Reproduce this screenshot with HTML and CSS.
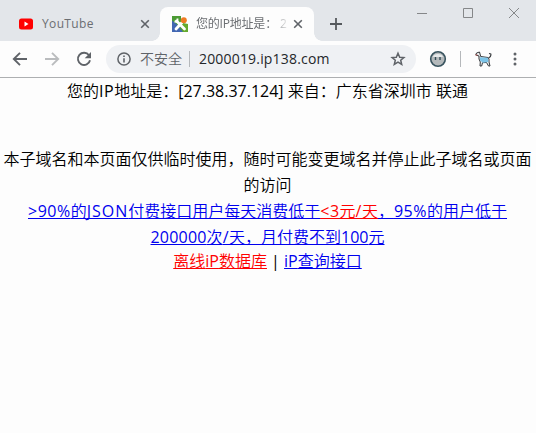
FILE: index.html
```html
<!DOCTYPE html>
<html lang="zh-CN">
<head>
<meta charset="utf-8">
<title>您的IP地址是</title>
<link rel="stylesheet" href="styles.css">
</head>
<body>
<header class="tabstrip">
  <div class="tab tab-idle">
    <svg class="favicon" width="16" height="16" viewBox="0 0 16 16"><rect x="1" y="2.5" width="14" height="11" rx="2.5" fill="#f00"/><path d="M6.5 5.5v5L10.5 8z" fill="#fff"/></svg>
    <span class="tab-title youtube">YouTube</span>
    <svg class="close" width="10" height="10" viewBox="0 0 10 10"><path d="M1.2 1.2l7.6 7.6M8.8 1.2L1.2 8.8" stroke="#5f6368" stroke-width="1.6"/></svg>
  </div>
  <div class="tab tab-active">
    <svg class="favicon" width="16" height="16" viewBox="0 0 16 16"><path d="M0 0h16v16H0z" fill="#4c9b35"/><path d="M0 4.5l5 4L11 16H0z" fill="#4267b2"/><path d="M9 8l7-1v9h-5z" fill="#65aa2d"/><path d="M9 0h7v8l-5-1-2-3z" fill="#fff"/><path d="M4.5 5l8 8M10 6.5L4 13" stroke="#fff" stroke-width="2.8" stroke-linecap="round"/><path d="M2.5 5.5l3 .5V2.5" fill="none" stroke="#fff" stroke-width="1.8"/><circle cx="11.8" cy="4.3" r="3" fill="#ee7b24"/></svg>
    <span class="tab-title page-title">您的IP地址是： 2</span>
    <svg class="close" width="10" height="10" viewBox="0 0 10 10"><path d="M1.2 1.2l7.6 7.6M8.8 1.2L1.2 8.8" stroke="#5f6368" stroke-width="1.6"/></svg>
  </div>
  <svg class="plus" width="12" height="12" viewBox="0 0 12 12"><path d="M6 0v12M0 6h12" stroke="#55595d" stroke-width="1.8"/></svg>
  <div class="window-controls">
    <svg width="10" height="10" viewBox="0 0 10 10"><path d="M0 5.5h10" stroke="#858789"/></svg>
    <svg width="10" height="10" viewBox="0 0 10 10"><path d="M.5.5h9v9h-9z" fill="none" stroke="#858789"/></svg>
    <svg width="10" height="10" viewBox="0 0 10 10"><path d="M0 0l10 10M10 0L0 10" stroke="#858789"/></svg>
  </div>
</header>
<nav class="toolbar">
  <svg class="nav-icon" width="16" height="16" viewBox="0 0 16 16"><path d="M15 8H2M8 1.8L1.8 8 8 14.2" fill="none" stroke="#5f6368" stroke-width="1.9"/></svg>
  <svg class="nav-icon" width="16" height="16" viewBox="0 0 16 16"><path d="M1 8h13M8 1.8L14.2 8 8 14.2" fill="none" stroke="#babcbe" stroke-width="1.9"/></svg>
  <svg class="nav-icon" width="16" height="16" viewBox="0 0 16 16"><path d="M13 4.3A6.1 6.1 0 1 0 14 9.2" fill="none" stroke="#5f6368" stroke-width="1.9"/><path d="M15 1v6.3H8.7z" fill="#5f6368"/></svg>
  <div class="omnibox">
    <svg width="14" height="14" viewBox="0 0 14 14"><circle cx="7" cy="7" r="6.1" fill="none" stroke="#5f6368" stroke-width="1.5"/><path d="M7 6.2v4.3M7 3.4v1.5" stroke="#5f6368" stroke-width="1.6"/></svg>
    <span class="security">不安全</span>
    <i class="divider"></i>
    <span class="url">2000019.ip138.com</span>
    <svg class="star" width="16" height="16" viewBox="0 0 16 16"><path d="M8 2.2l1.7 4 4.2.3-3.2 2.8 1 4.1L8 11.2l-3.7 2.2 1-4.1-3.2-2.8 4.2-.3z" fill="none" stroke="#5f6368" stroke-width="1.5"/></svg>
  </div>
  <svg class="ext-face" width="18" height="18" viewBox="0 0 18 18"><circle cx="9" cy="9" r="7.3" fill="#b4b9bb" stroke="#39545f" stroke-width="1.6"/><path d="M3.8 7q1-3 5.2-3 4 0 5 3z" fill="#e6e9ea"/><path d="M6.5 7v3M11 7v3" stroke="#344b55" stroke-width="1.4"/></svg>
  <i class="toolbar-divider"></i>
  <svg class="ext-dog" width="18" height="18" viewBox="0 0 18 18"><path d="M2.5 3l1.5-.5L5.5 2l1.2 4.5 7.3 1 1 1.5v3l1 4h-1.5l-2-3.5-4 .2-.8 3.3H6l.3-4L5 9V6L1.8 5z" fill="#edf0f1" stroke="#34383c"/><path d="M14.5 8q3-1.5 2.3-4l-1.8-.5" fill="none" stroke="#34383c" stroke-width="1.1"/><path d="M6 7.3l8 .5.4 4.2-5.4.8L6 10.5z" fill="#7cc4e8"/><path d="M1.5 5h2" stroke="#c05a56"/></svg>
  <svg class="menu" width="4" height="14" viewBox="0 0 4 14"><g fill="#5f6368"><circle cx="2" cy="2" r="1.5"/><circle cx="2" cy="7" r="1.5"/><circle cx="2" cy="12" r="1.5"/></g></svg>
</nav>
<main class="page">
  <p class="line address">您的<span class="latin wide">IP</span>地址是：<span class="latin">[27.38.37.124] </span>来自：广东省深圳市<span class="latin"> </span>联通</p>
  <p class="line notice">本子域名和本页面仅供临时使用，随时可能变更域名并停止此子域名或页面<br>的访问</p>
  <p class="line offer"><a href="#"><span class="latin wide">&gt;90%</span>的<span class="latin wider">JSON</span>付费接口用户每天消费低于<span class="red"><span class="latin wide">&lt;3</span>元<span class="latin wide">/</span>天</span>，<span class="latin wide">95%</span>的用户低于<br><span class="latin digits">200000</span>次<span class="latin wide">/</span>天，月付费不到<span class="latin">100</span>元</a></p>
  <p class="line links"><a class="red" href="#">离线<span class="latin">iP</span>数据库</a><span class="latin"> | </span><a href="#"><span class="latin">iP</span>查询接口</a></p>
</main>
</body>
</html>
```
FILE: styles.css
```css
* { box-sizing: border-box; }
body {
  margin: 0;
  height: 433px;
  overflow: hidden;
  background: #fdfdfd;
  color: #000;
  font-family: "Open Sans", "Noto Sans CJK SC", sans-serif;
}
svg { display: block; flex: none; }
.tabstrip {
  height: 41px;
  background: #e3e6ea;
  display: flex;
  align-items: flex-end;
}
.tab {
  height: 34px;
  display: flex;
  align-items: center;
  font-size: 12px;
  color: #6b6e72;
}
.tab-idle { width: 160px; padding-left: 18px; }
.tab-active {
  width: 154px;
  padding-left: 12px;
  background: #fdfdfd;
  border-radius: 8px 8px 0 0;
  position: relative;
}
.tab-active::before, .tab-active::after {
  content: "";
  position: absolute;
  bottom: 0;
  width: 8px;
  height: 8px;
}
.tab-active::before { left: -8px; background: radial-gradient(circle at 0 0, transparent 7.5px, #fdfdfd 8px); }
.tab-active::after { right: -8px; background: radial-gradient(circle at 100% 0, transparent 7.5px, #fdfdfd 8px); }
.tab-title { margin-left: 8px; white-space: nowrap; line-height: 18px; }
.youtube { width: 98px; letter-spacing: .35px; }
.page-title {
  width: 97px;
  overflow: hidden;
  letter-spacing: -.2px;
  -webkit-mask-image: linear-gradient(90deg, #000 75px, transparent 94px);
  mask-image: linear-gradient(90deg, #000 75px, transparent 94px);
}
.plus { margin: 0 0 11px 16px; }
.window-controls {
  display: flex;
  gap: 36px;
  align-self: flex-start;
  margin: 8px 17px 0 auto;
}
.toolbar {
  height: 37px;
  padding-left: 12px;
  border-bottom: 1px solid #adafb1;
  background: #fdfdfd;
  display: flex;
  align-items: center;
}
.nav-icon { margin-right: 16px; }
.omnibox {
  width: 310px;
  height: 28px;
  padding: 0 10px 0 11px;
  margin-left: -2px;
  border-radius: 14px;
  background: #eff1f4;
  display: flex;
  align-items: center;
  white-space: nowrap;
}
.security {
  width: 42px;
  margin-left: 9px;
  font-size: 14px;
  font-weight: 350;
  line-height: 20px;
  color: #5f6368;
}
.divider, .toolbar-divider { width: 1px; height: 16px; background: #b5b8bb; }
.divider { margin-left: 7px; }
.url { margin-left: 9px; font-size: 14px; letter-spacing: .18px; line-height: 20px; color: #24272a; }
.star { margin-left: auto; }
.ext-face { margin-left: 13px; }
.toolbar-divider { margin-left: 13px; }
.ext-dog { margin-left: 13px; }
.menu { margin-left: 21px; }
.page { text-align: center; white-space: nowrap; margin: -1px 1px 0 0; }
.line {
  margin: 0;
  font-family: "Noto Sans CJK SC", sans-serif;
  font-size: 16px;
  font-weight: 350;
  line-height: 26px;
}
.latin { font-family: "Open Sans", sans-serif; font-weight: 400; line-height: 1; }
.wide { letter-spacing: .5px; }
.wider { letter-spacing: 1px; }
.digits { letter-spacing: .2px; }
.address { height: 68px; }
.notice { height: 52px; }
.offer { height: 50px; }
a {
  color: #0000ee;
  text-decoration: underline;
  text-decoration-thickness: 1px;
  text-decoration-skip-ink: none;
  text-underline-offset: 1px;
}
.red { color: #f00; }
.offer .red {
  text-decoration: underline 1px;
  text-decoration-skip-ink: none;
  text-underline-offset: 1px;
}
```
